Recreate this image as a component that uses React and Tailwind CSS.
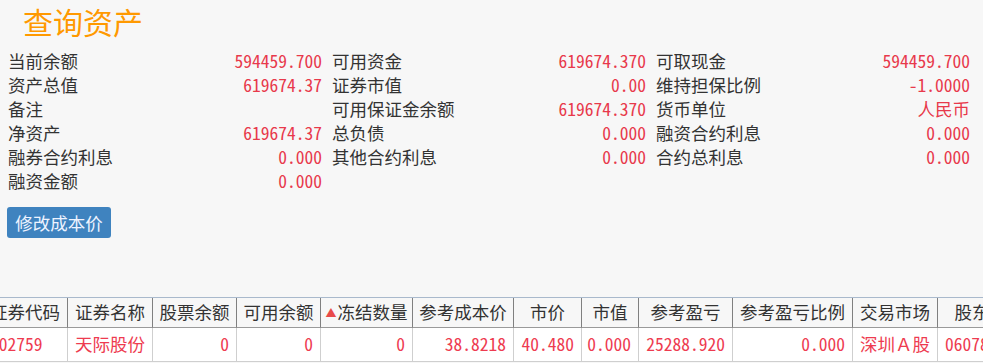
import React from 'react';

const info = [
  [['当前余额', '594459.700'], ['可用资金', '619674.370'], ['可取现金', '594459.700']],
  [['资产总值', '619674.37'], ['证券市值', '0.00'], ['维持担保比例', '-1.0000']],
  [['备注', ''], ['可用保证金余额', '619674.370'], ['货币单位', '人民币']],
  [['净资产', '619674.37'], ['总负债', '0.000'], ['融资合约利息', '0.000']],
  [['融券合约利息', '0.000'], ['其他合约利息', '0.000'], ['合约总利息', '0.000']],
  [['融资金额', '0.000']],
];

// header label, alignment of the data cell, data value
const columns = [
  { title: '证券代码', align: 'left', value: '002759' },
  { title: '证券名称', align: 'left', value: '天际股份' },
  { title: '股票余额', align: 'right', value: '0' },
  { title: '可用余额', align: 'right', value: '0' },
  { title: '冻结数量', align: 'right', value: '0', sorted: true },
  { title: '参考成本价', align: 'right', value: '38.8218' },
  { title: '市价', align: 'right', value: '40.480' },
  { title: '市值', align: 'right', value: '0.000' },
  { title: '参考盈亏', align: 'right', value: '25288.920' },
  { title: '参考盈亏比例', align: 'right', value: '0.000' },
  { title: '交易市场', align: 'left', value: '深圳Ａ股' },
  { title: '股东代码', align: 'left', value: '0607845231' },
];

const App = () => {
  return (
    <div className="w-full h-[363px] overflow-hidden bg-[#f7f7f7] text-[#333] font-['Noto_Sans_Mono_CJK_SC','Noto_Sans_CJK_SC',sans-serif]">
      <h1 className="pl-[23px] pt-[2px] h-[41px] leading-[39px] text-[30px] text-[#ff9900] font-normal">
        查询资产
      </h1>

      <div className="mt-[8px] px-[3px] grid grid-cols-[324px_324px_324px] text-[17.5px] leading-[24px]">
        {info.map((row) =>
          row.map(([label, value], i) => (
            <div key={label} className="h-[24px] px-[5px] flex justify-between items-center">
              <span>{label}</span>
              <span className="text-[#e8394b]">{value}</span>
            </div>
          ))
        )}
      </div>

      <button className="mt-[14px] ml-[7px] w-[104px] h-[31px] rounded-[3px] bg-[#3f83bf] text-[#eef3ff] text-[17.5px] leading-[31px]">
        修改成本价
      </button>

      <div className="mt-[59px] ml-[-17px] w-[1059px] border-t border-[#a9b9cc] grid grid-cols-[85px_85px_84px_84px_92px_101px_68px_57px_94px_120px_85px_104px] text-[17.5px]">
        {columns.map((col) => (
          <div
            key={col.title}
            className="h-[30px] border-r border-b border-r-[#808080] border-b-[#9a9a9a] bg-[#f7f7f7] flex items-center justify-center whitespace-nowrap"
          >
            {col.sorted && <span className="text-[#e84a4a] text-[11px] mr-[1px]">▲</span>}
            {col.title}
          </div>
        ))}
        {columns.map((col) => (
          <div
            key={col.title + '-v'}
            className={
              'h-[34px] border-r border-b border-[#cfcfcf] bg-white flex items-center px-[7px] whitespace-nowrap text-[#ee3b50] ' +
              (col.align === 'right' ? 'justify-end' : 'justify-start')
            }
          >
            {col.value}
          </div>
        ))}
      </div>
    </div>
  );
};

export default App;
